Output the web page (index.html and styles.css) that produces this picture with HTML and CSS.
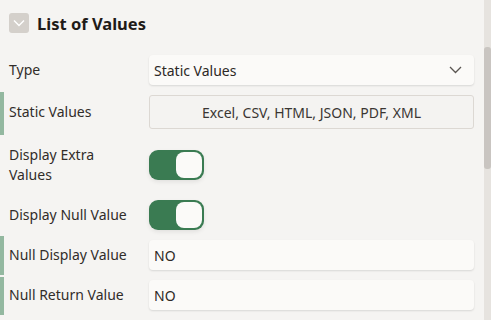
FILE: index.html
```html
<!DOCTYPE html>
<html lang="en">
<head>
    <meta charset="UTF-8">
    <meta name="viewport" content="width=device-width, initial-scale=1.0">
    <title>List of Values</title>
    <link rel="stylesheet" href="styles.css">
</head>
<body>
    <div class="page">
        <div class="panel">
            <header class="group-head">
                <span class="collapse-btn">
                    <svg width="12" height="8" viewBox="0 0 12 8"><path d="M1 1.5 L6 6.5 L11 1.5" fill="none" stroke="#fff" stroke-width="1.4"/></svg>
                </span>
                <h2>List of Values</h2>
            </header>

            <div class="row row-type">
                <label class="prop-label">Type</label>
                <div class="field select">
                    <span>Static Values</span>
                    <svg width="13" height="8" viewBox="0 0 13 8"><path d="M1 1 L6.5 6.5 L12 1" fill="none" stroke="#5a5652" stroke-width="1.3"/></svg>
                </div>
            </div>

            <div class="row row-static changed">
                <label class="prop-label">Static Values</label>
                <div class="field button-field">Excel, CSV, HTML, JSON, PDF, XML</div>
            </div>

            <div class="row row-switch row-two-line">
                <label class="prop-label">Display Extra<br>Values</label>
                <div class="switch"><span class="knob"></span></div>
            </div>

            <div class="row row-switch">
                <label class="prop-label">Display Null Value</label>
                <div class="switch"><span class="knob"></span></div>
            </div>

            <div class="row row-text changed">
                <label class="prop-label">Null Display Value</label>
                <div class="field">NO</div>
            </div>

            <div class="row row-text row-last changed">
                <label class="prop-label">Null Return Value</label>
                <div class="field">NO</div>
            </div>
        </div>
        <div class="scrollbar"><div class="thumb"></div></div>
    </div>
</body>
</html>
```

FILE: styles.css
```css
body {
    margin: 0;
    background-color: #f5f4f2;
    font-family: "Noto Sans", "Open Sans", sans-serif;
    color: #312d2a;
}
.page {
    display: flex;
    height: 320px;
    overflow: hidden;
}
.panel {
    flex: 1;
}
.group-head {
    display: flex;
    align-items: center;
    gap: 8px;
    height: 45px;
    padding: 1px 9px 0;
    box-sizing: border-box;
}
.collapse-btn {
    width: 20px;
    height: 20px;
    border-radius: 3px;
    background-color: #d4d0cb;
    display: flex;
    align-items: center;
    justify-content: center;
}
.group-head h2 {
    margin: 0;
    font-size: 16.5px;
    font-weight: 700;
    color: #1f1b18;
}
.row {
    display: flex;
    align-items: center;
    padding-left: 9px;
    padding-right: 10px;
    position: relative;
}
.changed::before {
    content: "";
    position: absolute;
    left: 0;
    top: 0;
    bottom: 0;
    width: 4px;
    background-color: #93b8a0;
}
.prop-label {
    width: 140px;
    flex: none;
    font-size: 14px;
    line-height: 20px;
}
.field {
    flex: 1;
    height: 30px;
    box-sizing: border-box;
    background-color: #fbfaf8;
    border-radius: 4px;
    box-shadow: 0 1px 2px rgba(0, 0, 0, 0.12);
    display: flex;
    align-items: center;
    padding: 0 5px;
    font-size: 14px;
    color: #2d2926;
}
.select {
    justify-content: space-between;
    padding-right: 12px;
}
.button-field {
    height: 34px;
    justify-content: center;
    background-color: #f4f3f1;
    border: 1px solid #dcd8d3;
    box-shadow: none;
    border-radius: 3px;
    color: #3a3633;
}
.row-type {
    padding-top: 10px;
    padding-bottom: 5px;
}
.row-static {
    margin-top: 2px;
    padding-top: 3px;
    padding-bottom: 6px;
}
.row-switch {
    padding-top: 15px;
    padding-bottom: 5px;
}
.row-two-line {
    padding-top: 10px;
    padding-bottom: 0;
}
.row-two-line .prop-label {
    line-height: 20px;
}
.row-text {
    margin-top: 1px;
    padding-top: 4px;
    padding-bottom: 5px;
}
.row-last {
    margin-top: 2px;
    padding-top: 3px;
}
.switch {
    width: 55px;
    height: 30px;
    box-sizing: border-box;
    border-radius: 9px;
    background-color: #3a7b52;
    padding: 2px;
    display: flex;
    justify-content: flex-end;
    box-shadow: 0 2px 4px rgba(0, 0, 0, 0.08);
}
.knob {
    width: 26px;
    height: 26px;
    border-radius: 8px;
    background-color: #fbfaf8;
}
.scrollbar {
    width: 7px;
    background-color: #e6e3df;
    padding-top: 47px;
}
.thumb {
    height: 122px;
    background-color: #c9c5c1;
    border-radius: 3px;
}
```
